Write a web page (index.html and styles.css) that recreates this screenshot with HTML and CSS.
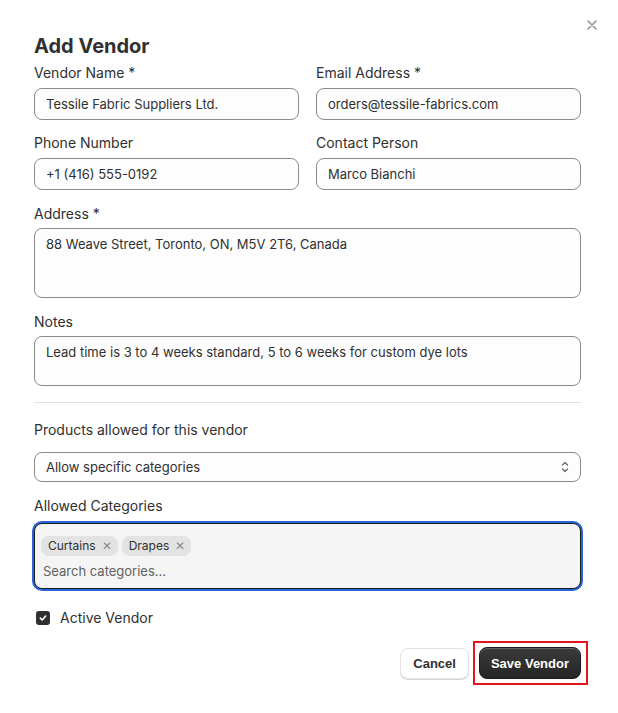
FILE: index.html
```html
<!DOCTYPE html>
<html lang="en">
<head>
    <meta charset="UTF-8">
    <meta name="viewport" content="width=device-width, initial-scale=1.0">
    <title>Add Vendor</title>
    <link rel="stylesheet" href="styles.css">
</head>
<body>
    <div class="modal">
        <button class="close-btn" type="button" aria-label="Close">
            <svg width="10" height="10" viewBox="0 0 10 10"><path d="M1 1L9 9M9 1L1 9" stroke="#8a8a8a" stroke-width="1.3" stroke-linecap="round"/></svg>
        </button>
        <h2>Add Vendor</h2>
        <form id="vendor-form">
            <div class="row">
                <div class="form-group">
                    <label for="name">Vendor Name *</label>
                    <input type="text" id="name" value="Tessile Fabric Suppliers Ltd.">
                </div>
                <div class="form-group">
                    <label for="email">Email Address *</label>
                    <input type="text" id="email" value="orders@tessile-fabrics.com">
                </div>
            </div>
            <div class="row">
                <div class="form-group">
                    <label for="phone">Phone Number</label>
                    <input type="text" id="phone" value="+1 (416) 555-0192">
                </div>
                <div class="form-group">
                    <label for="contact">Contact Person</label>
                    <input type="text" id="contact" value="Marco Bianchi">
                </div>
            </div>
            <div class="form-group">
                <label for="address">Address *</label>
                <textarea id="address" class="tall">88 Weave Street, Toronto, ON, M5V 2T6, Canada</textarea>
            </div>
            <div class="form-group">
                <label for="notes">Notes</label>
                <textarea id="notes" class="short">Lead time is 3 to 4 weeks standard, 5 to 6 weeks for custom dye lots</textarea>
            </div>
            <hr>
            <div class="form-group">
                <label for="mode">Products allowed for this vendor</label>
                <div class="select">
                    <span>Allow specific categories</span>
                    <svg width="10" height="14" viewBox="0 0 10 14"><path d="M2.5 5L5 2.5L7.5 5M2.5 9L5 11.5L7.5 9" fill="none" stroke="#616161" stroke-width="1.2" stroke-linecap="round" stroke-linejoin="round"/></svg>
                </div>
            </div>
            <div class="form-group">
                <label>Allowed Categories</label>
                <div class="tag-box">
                    <div class="tags">
                        <span class="tag">Curtains <span class="tag-x">&#x2715;</span></span>
                        <span class="tag">Drapes <span class="tag-x">&#x2715;</span></span>
                    </div>
                    <input type="text" class="tag-search" placeholder="Search categories...">
                </div>
            </div>
            <label class="check">
                <span class="box">
                    <svg width="10" height="10" viewBox="0 0 10 10"><path d="M2.3 5.2L4.2 7L7.7 3" fill="none" stroke="#fff" stroke-width="1.6" stroke-linecap="round" stroke-linejoin="round"/></svg>
                </span>
                Active Vendor
            </label>
            <div class="actions">
                <button type="button" class="btn-cancel">Cancel</button>
                <div class="highlight">
                    <button type="button" class="btn-save">Save Vendor</button>
                </div>
            </div>
        </form>
    </div>
</body>
</html>
```
FILE: styles.css
```css
body {
  margin: 0;
  background: #fff;
  font-family: Inter, "Noto Sans", sans-serif;
  color: #303030;
}
.modal {
  position: relative;
  padding: 33px 37px 0 34px;
}
.close-btn {
  position: absolute;
  top: 18px;
  right: 19px;
  width: 14px;
  height: 14px;
  padding: 0;
  border: none;
  background: none;
  display: flex;
  align-items: center;
  justify-content: center;
}
h2 {
  margin: 0 0 4px;
  font-size: 20px;
  font-weight: 700;
  line-height: 26px;
}
.row {
  display: grid;
  grid-template-columns: 1fr 1fr;
  gap: 17px;
}
.form-group {
  margin-bottom: 14px;
}
label {
  display: block;
  font-size: 14px;
  line-height: 20px;
  margin-bottom: 4px;
}
.row label {
  margin-bottom: 5px;
}
.row .form-group {
  margin-bottom: 14px;
}
.row:first-child .form-group {
  margin-bottom: 13px;
}
input,
textarea {
  display: block;
  width: 100%;
  box-sizing: border-box;
  font-family: Inter, "Noto Sans", sans-serif;
  font-size: 13px;
  color: #303030;
  background: #fdfdfd;
  border: 1px solid #8a8a8a;
  border-radius: 8px;
  padding: 0 11px;
  height: 32px;
}
textarea {
  resize: none;
  padding: 6px 11px;
  line-height: 18px;
}
.tall {
  height: 70px;
}
.short {
  height: 50px;
}
hr {
  border: none;
  border-top: 1px solid #e3e3e3;
  margin: 16px 0 17px;
}
.select {
  display: flex;
  align-items: center;
  justify-content: space-between;
  height: 30px;
  box-sizing: border-box;
  border: 1px solid #8a8a8a;
  border-radius: 8px;
  background: #fdfdfd;
  padding: 0 10px 0 11px;
  font-size: 13px;
  margin-top: 12px;
}
.tag-box {
  border: 1px solid #1a1a1a;
  border-radius: 8px;
  background: #f5f5f5;
  box-shadow: 0 0 0 2px #2b63d9;
  padding: 12px 6px 2px 6px;
  margin-top: 7px;
}
.tags {
  display: flex;
  gap: 4px;
}
.tag {
  display: inline-flex;
  align-items: center;
  gap: 6px;
  background: #e3e3e3;
  border-radius: 8px;
  font-size: 12px;
  line-height: 20px;
  padding: 0 6px 0 7px;
}
.tag-x {
  font-size: 12px;
  color: #8a8a8a;
}
.tag-search {
  border: none;
  background: transparent;
  height: 30px;
  padding: 0 2px;
  font-size: 13px;
}
.tag-search::placeholder {
  color: #616161;
}
.check {
  display: flex;
  align-items: center;
  gap: 10px;
  margin: 19px 0 0 2px;
  font-size: 14px;
}
.box {
  width: 14px;
  height: 14px;
  border-radius: 3px;
  background: #303030;
  display: flex;
  align-items: center;
  justify-content: center;
}
.actions {
  display: flex;
  justify-content: flex-end;
  align-items: center;
  gap: 4px;
  margin-top: 13px;
  margin-right: -7px;
}
.actions button {
  font-family: "Liberation Sans", Arial, sans-serif;
  font-size: 13px;
  font-weight: 700;
  border-radius: 8px;
  cursor: pointer;
}
.btn-cancel {
  height: 31px;
  padding: 0 12px;
  background: #fff;
  color: #303030;
  border: 1px solid #e3e3e3;
  box-shadow: 0 1px 0 #d4d4d4;
}
.highlight {
  border: 2px solid #e5141c;
  padding: 4px 5px 4px 4px;
}
.btn-save {
  height: 32px;
  padding: 0 11px;
  color: #fff;
  border: 1px solid #1a1a1a;
  background: linear-gradient(#3a3a3a, #262626);
  box-shadow: inset 0 1px 0 rgba(255, 255, 255, 0.2);
}
```
